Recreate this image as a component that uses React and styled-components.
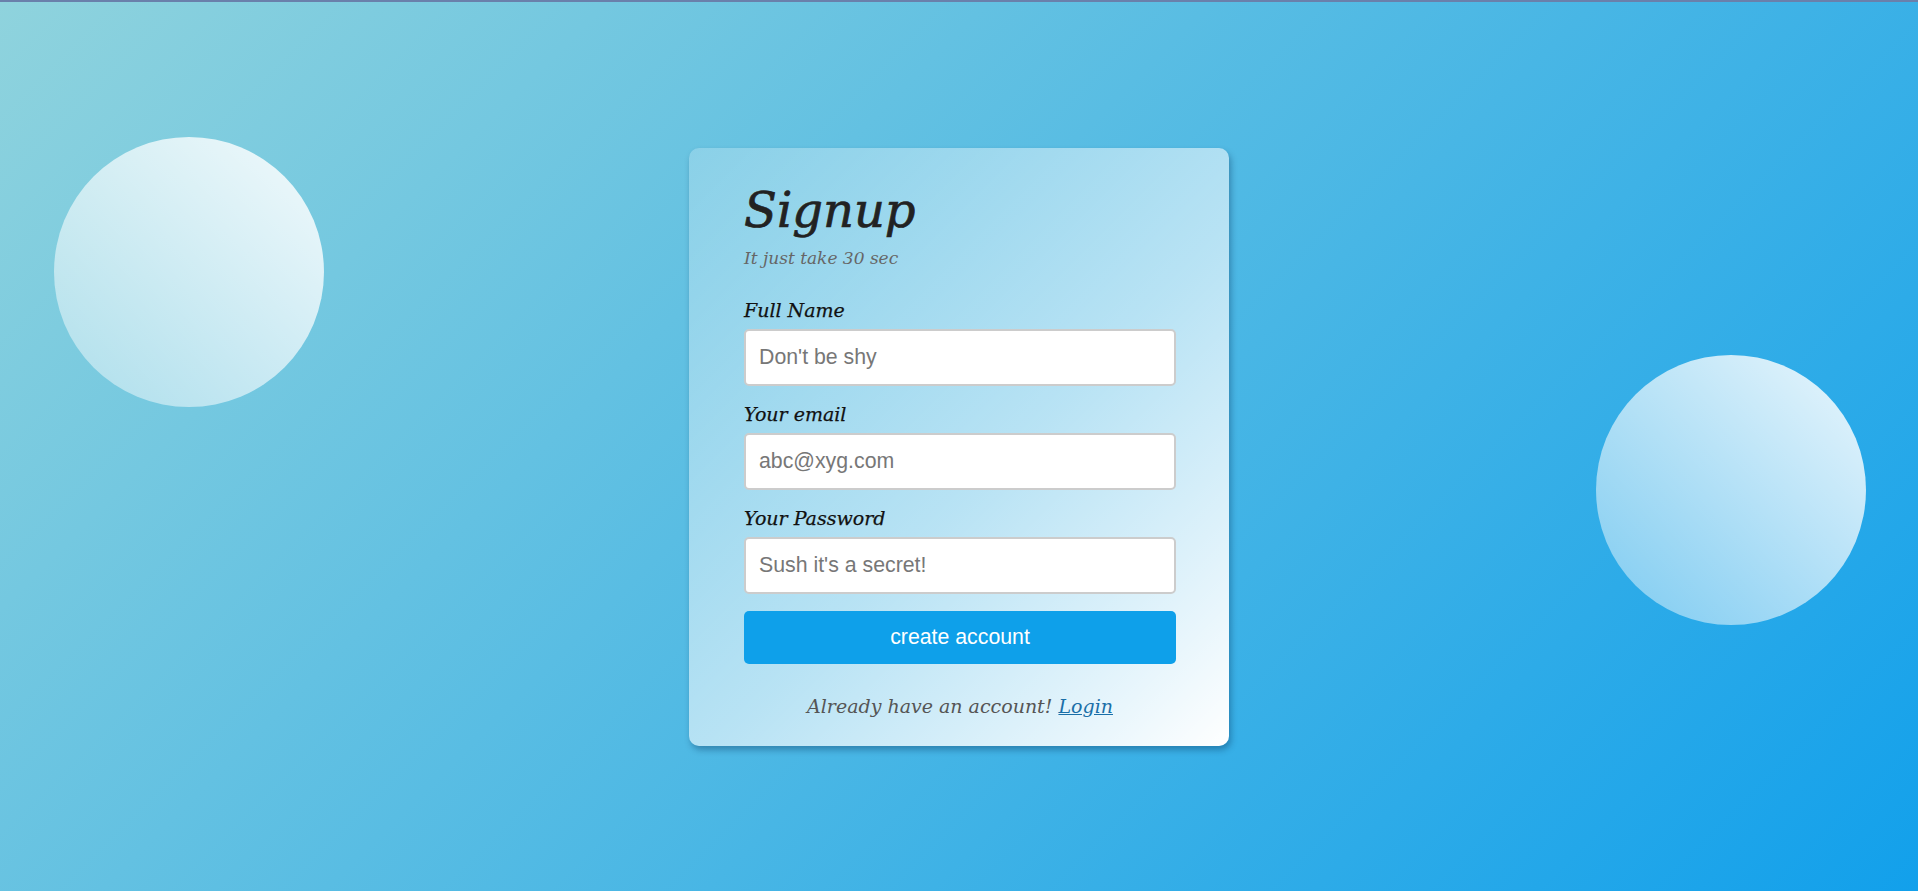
import React from 'react';
import styled, { createGlobalStyle } from 'styled-components';

const GlobalStyle = createGlobalStyle`
  * {
    box-sizing: border-box;
  }
  body {
    margin: 0;
    font-family: "DejaVu Serif", "Liberation Serif", serif;
  }
`;

const Page = styled.div`
  position: relative;
  height: 891px;
  overflow: hidden;
  border-top: 2px solid #6a80ab;
  background: linear-gradient(135deg, #8fd3dd 0%, #12a0eb 100%);
  display: flex;
  align-items: center;
  justify-content: center;
`;

const Bubble = styled.div`
  position: absolute;
  width: 270px;
  height: 270px;
  border-radius: 50%;
  top: ${(p) => p.top}px;
  left: ${(p) => p.left}px;
  background: linear-gradient(
    45deg,
    rgba(255, 255, 255, 0.38) 0%,
    rgba(255, 255, 255, 0.9) 100%
  );
`;

const Card = styled.div`
  position: relative;
  width: 540px;
  padding: 29px 53px 27px 55px;
  border-radius: 10px;
  background: linear-gradient(
    135deg,
    rgba(255, 255, 255, 0.22) 0%,
    rgba(255, 255, 255, 0.6) 55%,
    rgba(255, 255, 255, 1) 100%
  );
  box-shadow: 2px 4px 6px rgba(0, 40, 80, 0.35);
  font-style: italic;
`;

const Title = styled.h1`
  margin: 0;
  font-size: 48px;
  line-height: 66px;
  font-weight: 400;
  font-style: italic;
  color: #222;
  -webkit-text-stroke: 0.7px #222;
`;

const Subtitle = styled.p`
  margin: 4px 0 28px;
  font-size: 17px;
  line-height: 22px;
  color: #666;
`;

const Field = styled.div`
  display: flex;
  flex-direction: column;
  margin-bottom: 15px;
`;

const Label = styled.label`
  font-size: 19px;
  line-height: 26px;
  color: #111;
  margin-bottom: 6px;
  -webkit-text-stroke: 0.25px #111;
`;

const Input = styled.input`
  height: 57px;
  width: 100%;
  padding: 0 13px;
  border: 2px solid #ccc;
  border-radius: 5px;
  background: #fff;
  font-family: "Liberation Sans", Arial, sans-serif;
  font-size: 21.3px;
  font-style: normal;
  color: #333;
  outline: none;
  &::placeholder {
    color: #777;
  }
`;

const Button = styled.button`
  width: 100%;
  height: 53px;
  margin-top: 2px;
  border: none;
  border-radius: 5px;
  background: #0ea0ea;
  color: #fff;
  font-family: "Liberation Sans", Arial, sans-serif;
  font-size: 21.3px;
  cursor: pointer;
`;

const Footer = styled.p`
  margin: 29px 0 0;
  text-align: center;
  font-size: 19px;
  line-height: 26px;
  color: #555;
  a {
    color: #1a6fa8;
    text-decoration: underline;
  }
`;

const fields = [
  { id: 'name', label: 'Full Name', type: 'text', placeholder: "Don't be shy" },
  { id: 'email', label: 'Your email', type: 'email', placeholder: 'abc@xyg.com' },
  { id: 'password', label: 'Your Password', type: 'password', placeholder: "Sush it's a secret!" },
];

export default function App() {
  return (
    <>
      <GlobalStyle />
      <Page>
        <Bubble top={135} left={54} />
        <Bubble top={353} left={1596} />
        <Card>
          <Title>Signup</Title>
          <Subtitle>It just take 30 sec</Subtitle>
          <form onSubmit={(e) => e.preventDefault()}>
            {fields.map((f) => (
              <Field key={f.id}>
                <Label htmlFor={f.id}>{f.label}</Label>
                <Input id={f.id} type={f.type} placeholder={f.placeholder} />
              </Field>
            ))}
            <Button type="submit">create account</Button>
          </form>
          <Footer>
            Already have an account! <a href="#login">Login</a>
          </Footer>
        </Card>
      </Page>
    </>
  );
}
